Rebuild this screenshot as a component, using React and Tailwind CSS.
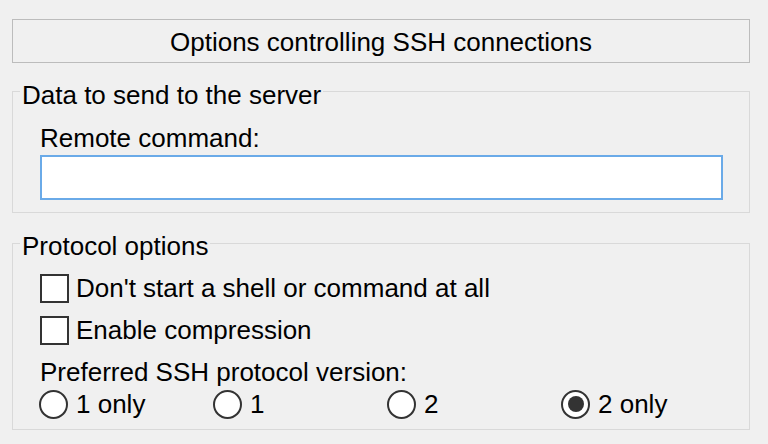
import React, { useState } from 'react';

const font = { fontFamily: '"Liberation Sans", Arial, sans-serif' };

const CheckBox = ({ label, checked, onChange }) => (
  <label className="flex h-[30px] items-center gap-[7px] cursor-default">
    <span
      onClick={onChange}
      className="flex h-[29px] w-[29px] shrink-0 items-center justify-center border-2 border-[#333333] bg-white"
    >
      {checked && <span className="h-[13px] w-[13px] bg-[#333333]" />}
    </span>
    <span>{label}</span>
  </label>
);

const Radio = ({ label, selected, onSelect }) => (
  <div className="flex h-[30px] w-[174px] items-center gap-[8px]" onClick={onSelect}>
    <span className="flex h-[29px] w-[29px] shrink-0 items-center justify-center rounded-full border-2 border-[#333333] bg-white">
      {selected && <span className="h-[16px] w-[16px] rounded-full bg-[#333333]" />}
    </span>
    <span>{label}</span>
  </div>
);

const App = () => {
  const [noShell, setNoShell] = useState(false);
  const [compress, setCompress] = useState(false);
  const [version, setVersion] = useState('2 only');

  return (
    <div
      className="h-[444px] w-[768px] overflow-hidden bg-[#f0f0f0] pl-[12px] pr-[18px] pt-[19px] text-[26px] leading-[30px] text-black"
      style={font}
    >
      {/* header */}
      <div className="flex h-[44px] items-center justify-center border border-[#bcbcbc] bg-[#f0f0f0] pt-[2px]">
        Options controlling SSH connections
      </div>

      {/* Data to send to the server */}
      <fieldset className="mt-[10px] border border-[#d9d9d9] px-[7px]">
        <legend className="px-[2px] pt-[7px]">Data to send to the server</legend>
        <div className="pl-[20px] pr-[19px] pt-[13px] pb-[12px]">
          <div>Remote command:</div>
          <input
            type="text"
            className="mt-[2px] block h-[45px] w-full border-2 border-[#6aaae8] bg-white px-2 outline-none"
          />
        </div>
      </fieldset>

      {/* Protocol options */}
      <fieldset className="mt-[13px] border border-[#d9d9d9] px-[7px]">
        <legend className="px-[2px] pt-[5px]">Protocol options</legend>
        <div className="flex flex-col gap-[12px] pl-[20px] pr-[19px] pt-[12px]">
          <CheckBox
            label="Don't start a shell or command at all"
            checked={noShell}
            onChange={() => setNoShell(!noShell)}
          />
          <CheckBox
            label="Enable compression"
            checked={compress}
            onChange={() => setCompress(!compress)}
          />
        </div>
        <div className="pl-[20px] pt-[12px] pb-[10px]">
          <div>Preferred SSH protocol version:</div>
          <div className="mt-[2px] -ml-[1px] flex">
            {['1 only', '1', '2', '2 only'].map((v) => (
              <Radio key={v} label={v} selected={version === v} onSelect={() => setVersion(v)} />
            ))}
          </div>
        </div>
      </fieldset>
    </div>
  );
};

export default App;
